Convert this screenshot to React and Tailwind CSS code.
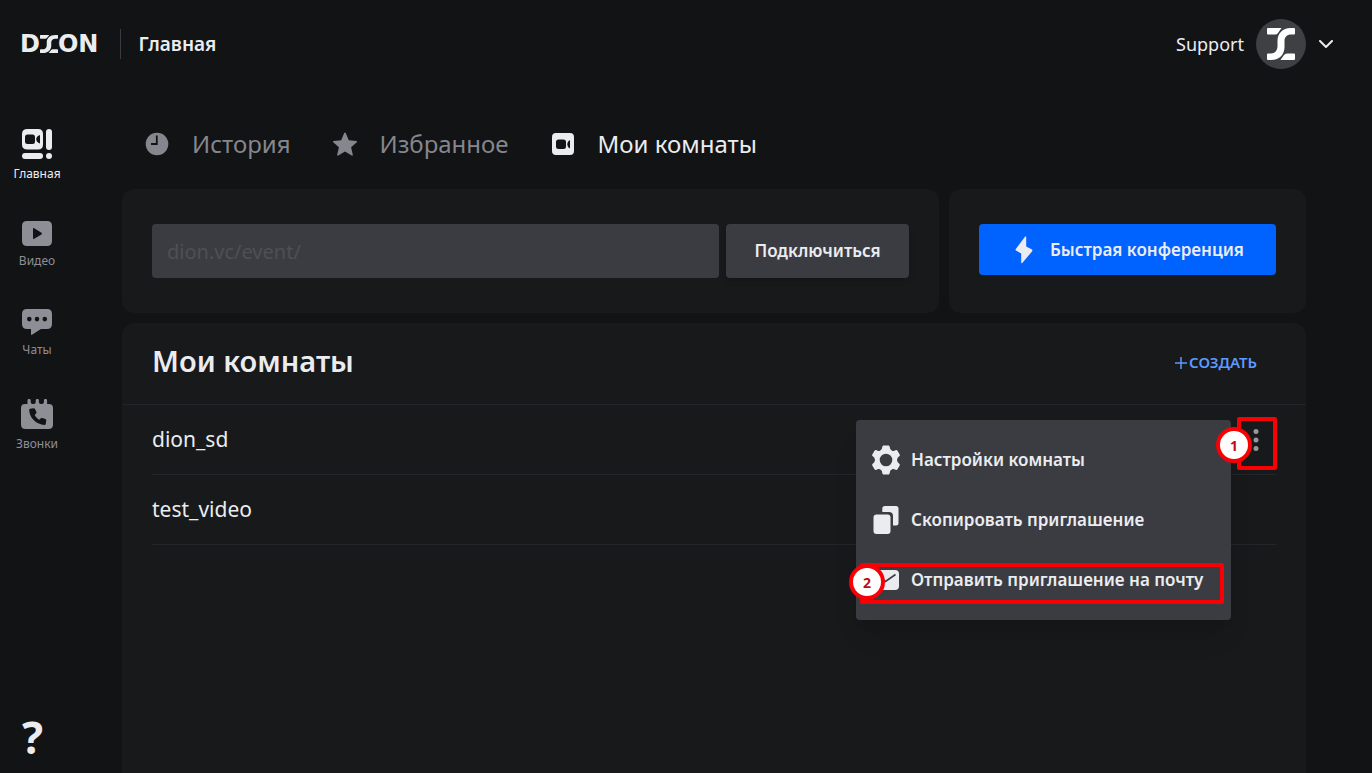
const LIGHT = "text-[#ebecf0]";

function GlyphI({ className }) {
  return (
    <svg viewBox="0 0 28 32" preserveAspectRatio="none" className={className} fill="currentColor" aria-hidden="true">
      <path d="M1 0H14.500L11 5Q10 6.500 8 6.500H1Q0 6.500 0 5.500V1Q0 0 1 0Z" />
      <path d="M27 0H24C15 0 10.500 6 10.500 13V18C10.500 22.500 8 25.500 4 25.500H1Q0 25.500 0 26.500V31Q0 32 1 32H4C13 32 17.500 26 17.500 19V13C17.500 9 20 6.500 24 6.500H27Q28 6.500 28 5.500V1Q28 0 27 0Z" />
      <path d="M27 32H13.500L17 27Q18 25.500 20 25.500H27Q28 25.500 28 26.500V31Q28 32 27 32Z" />
    </svg>
  );
}

function HomeIcon() {
  return (
    <svg viewBox="0 0 30 30" className="h-[30px] w-[30px]" fill="currentColor" aria-hidden="true">
      <path fillRule="evenodd" d="M5.500 0H16Q21 0 21 5V15.500Q21 20.500 16 20.500H5.500Q0 20.500 0 15.500V5Q0 0 5.500 0ZM5.500 5.500Q3 5.500 3 8V12.500Q3 15 5.500 15H10.500Q13 15 13 12.500V8Q13 5.500 10.500 5.500ZM18 6Q14.200 7.500 14.200 10.200Q14.200 13 18 14.500Z" />
      <rect x="24" width="6" height="21" rx="3" />
      <rect y="24" width="21" height="6" rx="3" />
      <circle cx="27" cy="27" r="3" />
    </svg>
  );
}

function VideoIcon() {
  return (
    <svg viewBox="0 0 30 25" className="h-[25px] w-[30px]" fill="currentColor" aria-hidden="true">
      <path fillRule="evenodd" d="M5 0H25Q30 0 30 5V20Q30 25 25 25H5Q0 25 0 20V5Q0 0 5 0ZM11 7.800V17.200Q11 18.400 12.200 17.800L19.500 13.400Q20.500 12.500 19.500 11.700L12.200 7.200Q11 6.600 11 7.800Z" />
    </svg>
  );
}

function ChatIcon() {
  return (
    <svg viewBox="0 0 30 26" className="h-[26px] w-[30px]" fill="currentColor" aria-hidden="true">
      <path fillRule="evenodd" d="M5 0H25Q30 0 30 5V15Q30 20 25 20H19L10 25.800Q9 26.200 9 25V20H5Q0 20 0 15V5Q0 0 5 0ZM7.300 7.800A2.300 2.300 0 1 0 7.300 12.400A2.300 2.300 0 1 0 7.300 7.800ZM15 7.800A2.300 2.300 0 1 0 15 12.400A2.300 2.300 0 1 0 15 7.800ZM22.800 7.800A2.300 2.300 0 1 0 22.800 12.400A2.300 2.300 0 1 0 22.800 7.800Z" />
    </svg>
  );
}

function CallsIcon() {
  return (
    <svg viewBox="0 0 32 30" className="h-[30px] w-8" fill="currentColor" aria-hidden="true">
      <path d="M6.500 5V1.500a1.600 1.600 0 0 1 3.200 0V3q0 2 2 2h1q2 0 2-2V1.500a1.600 1.600 0 0 1 3.200 0V3q0 2 2 2h1q2 0 2-2V1.500a1.600 1.600 0 0 1 3.200 0V5H28Q32 5 32 9V25.500Q32 30 27.500 30H4.500Q0 30 0 25.500V9Q0 5 4 5Z" />
      <path className="fill-[#121315]" d="M9 9.700L12.500 9.200Q13.500 9 14 10L15.300 12.700Q15.800 13.700 15 14.500L13.700 15.900C14.700 18 16.500 19.700 18.400 20.700L19.900 19.300Q20.500 18.700 21.500 19L24.300 20Q25.300 20.400 25.200 21.500L24.800 24.800Q24.600 26 23.500 26C15.500 25.500 8.500 19 8.200 11Q8.100 9.900 9 9.700Z" />
    </svg>
  );
}

function ClockIcon() {
  return (
    <svg viewBox="0 0 24 24" className="h-6 w-6" aria-hidden="true">
      <circle cx="12" cy="12" r="11.300" fill="currentColor" />
      <path d="M11.800 3.500V12H6" fill="none" className="stroke-[#121315]" strokeWidth="1.800" />
    </svg>
  );
}

function StarIcon() {
  return (
    <svg viewBox="0 0 26 24" className="h-6 w-[26px]" fill="currentColor" aria-hidden="true">
      <path d="M12.200 1Q13 0 13.700 1L16.800 8.200L24.400 8.900Q25.600 9.200 24.800 10.200L19.100 15.300L20.800 22.800Q20.900 24 19.700 23.500L13 19.500L6.300 23.500Q5.100 24 5.200 22.800L6.900 15.300L1.200 10.200Q.4 9.200 1.600 8.900L9.200 8.200Z" />
    </svg>
  );
}

function RoomIcon() {
  return (
    <svg viewBox="0 0 22 22" className="h-[22px] w-[22px]" fill="currentColor" aria-hidden="true">
      <path fillRule="evenodd" d="M4 0H18Q22 0 22 4V18Q22 22 18 22H4Q0 22 0 18V4Q0 0 4 0ZM6.500 6.500Q4 6.500 4 9V13.500Q4 16 6.500 16H11.500Q14 16 14 13.500V9Q14 6.500 11.500 6.500ZM18 7Q15.200 8.500 15.200 11.200Q15.200 14 18 15.500Z" />
    </svg>
  );
}

function BoltIcon() {
  return (
    <svg viewBox="0 0 18 28" className="h-7 w-[18px]" fill="currentColor" aria-hidden="true">
      <path d="M9.800 1Q11 -.4 11.200 1.200V10.500L17 13.600Q17.700 14.300 17.200 15.200L7.500 26.800Q6.300 28 6.200 26.500V17.500L1 14.500Q.2 13.900 .8 13Z" />
    </svg>
  );
}

function GearIcon() {
  return (
    <svg viewBox="0 0 28 30" className="h-[30px] w-7" fill="currentColor" aria-hidden="true">
      <path fillRule="evenodd" d="M11.500 .5H16.500Q17.300 .5 17.500 1.300Q17.700 4.800 20 5.700Q21.500 6.400 24 5.100Q24.800 4.700 25.300 5.400L27.700 9.600Q28.100 10.400 27.500 11Q25 12.700 25 15Q25 17.300 27.500 19Q28.100 19.600 27.700 20.400L25.300 24.600Q24.800 25.300 24 24.900Q21.500 23.600 20 24.300Q17.700 25.200 17.500 28.700Q17.300 29.500 16.500 29.500H11.500Q10.700 29.500 10.500 28.700Q10.300 25.200 8 24.300Q6.500 23.600 4 24.900Q3.200 25.300 2.700 24.600L.3 20.400Q-.1 19.600 .5 19Q3 17.300 3 15Q3 12.700 .5 11Q-.1 10.400 .3 9.600L2.700 5.400Q3.200 4.700 4 5.100Q6.500 6.400 8 5.700Q10.300 4.800 10.500 1.300Q10.700 .5 11.500 .5ZM14 8.700A6.300 6.300 0 1 0 14 21.300A6.300 6.300 0 1 0 14 8.700Z" />
    </svg>
  );
}

function CopyIcon() {
  return (
    <svg viewBox="0 0 28 28" className="h-7 w-7" fill="currentColor" aria-hidden="true">
      <rect x="1.500" y="8.500" width="17" height="19.500" rx="3" />
      <path d="M13 0H24Q26.500 0 26.500 2.500V17Q26.500 19.500 24 19.500H21V10Q21 6 17 6H10.300V2.700Q10.300 0 13 0Z" />
    </svg>
  );
}

function MailIcon() {
  return (
    <svg viewBox="0 0 28 20" className="h-5 w-7" aria-hidden="true">
      <rect x="1" width="26" height="20" rx="4" fill="currentColor" />
      <path d="M4 4.500L13.500 11.500L23.500 4.500" fill="none" className="stroke-[#3b3c41]" strokeWidth="1.600" />
    </svg>
  );
}

function NavItem({ icon, label, active, className }) {
  return (
    <a
      href="#"
      className={`flex flex-col items-center gap-[5px] text-[12px] leading-5 ${active ? LIGHT : "text-[#8d8e96]"} ${className}`}
    >
      {icon}
      {label}
    </a>
  );
}

function Tab({ icon, label, active }) {
  return (
    <a href="#" className={`flex items-center gap-[22px] text-[24px] leading-8 ${active ? LIGHT : "text-[#85868e]"}`}>
      <span className="flex w-[26px] justify-center">{icon}</span>
      {label}
    </a>
  );
}

function Marker({ children, className }) {
  return (
    <span
      className={`absolute flex h-9 w-9 items-center justify-center rounded-full border-4 border-[#f80004] bg-white text-[14px] font-bold text-[#c00a14] ${className}`}
    >
      {children}
    </span>
  );
}

function MenuItem({ icon, label, children }) {
  return (
    <li className="relative">
      <button type="button" className="flex h-[60px] w-full items-center gap-[11px] pl-4 text-[17px] font-semibold whitespace-nowrap">
        <span className="flex w-7 justify-center">{icon}</span>
        {label}
      </button>
      {children}
    </li>
  );
}

export default function App() {
  return (
    <div
      className={`flex min-h-screen flex-col bg-[#121315] font-[family-name:Noto_Sans,Open_Sans,sans-serif] ${LIGHT}`}
    >
      <header className="flex h-[88px] items-center pr-[39px] pl-5">
        <a
          href="#"
          aria-label="DION"
          className="flex items-center font-[family-name:DejaVu_Sans,sans-serif] text-[24px] leading-none font-bold"
        >
          <span>D</span>
          <GlyphI className="h-[18px] w-[18px]" />
          <span>ON</span>
        </a>
        <h1 className="ml-[22px] flex h-[30px] items-center border-l border-[#3b3c40] pl-[17px] text-[19px] font-semibold">
          Главная
        </h1>
        <button type="button" className="ml-auto flex items-center text-[18px]">
          Support
          <span className="ml-3 flex h-[50px] w-[50px] items-center justify-center rounded-full bg-[#3f4044] text-white">
            <GlyphI className="h-8 w-7" />
          </span>
          <svg viewBox="0 0 14 8" className="ml-[13px] h-2 w-[14px]" fill="none" stroke="currentColor" strokeWidth="2" strokeLinecap="round" aria-hidden="true">
            <path d="M1 1L7 7L13 1" />
          </svg>
        </button>
      </header>

      <div className="flex flex-1">
        <nav className="flex w-[74px] flex-col pt-[41px]">
          <NavItem icon={<HomeIcon />} label="Главная" active className="" />
          <NavItem icon={<VideoIcon />} label="Видео" className="mt-[37px]" />
          <NavItem icon={<ChatIcon />} label="Чаты" className="mt-[38px]" />
          <NavItem icon={<CallsIcon />} label="Звонки" className="mt-[39px]" />
          <a href="#" aria-label="Помощь" className="mt-auto pb-[14px] pl-[22px] text-[44px] leading-none font-bold">
            ?
          </a>
        </nav>

        <main className="mr-[66px] ml-12 flex flex-1 flex-col">
          <div className="flex h-[101px] items-center gap-[41px] pt-[10px] pl-[22px]">
            <Tab icon={<ClockIcon />} label="История" />
            <Tab icon={<StarIcon />} label="Избранное" />
            <Tab icon={<RoomIcon />} label="Мои комнаты" active />
          </div>

          <div className="flex gap-[10px]">
            <form className="flex h-[124px] flex-1 gap-[7px] rounded-xl bg-[#17191a] px-[30px] pt-[35px]">
              <input
                aria-label="Адрес мероприятия"
                placeholder="dion.vc/event/"
                className="h-[54px] min-w-0 flex-1 rounded-sm bg-[#3b3c41] px-[15px] text-[20px] placeholder:text-[#4e4f57]"
              />
              <button type="button" className="h-[54px] w-[183px] rounded-sm bg-[#3b3c41] text-[17px] font-semibold shadow-md">
                Подключиться
              </button>
            </form>
            <section className="h-[124px] w-[357px] rounded-xl bg-[#17191a] px-[30px] pt-[35px]">
              <button
                type="button"
                className="flex h-[51px] w-full items-center justify-center gap-[17px] rounded-sm bg-[#0062ff] pl-1 text-[17px] font-semibold whitespace-nowrap"
              >
                <BoltIcon />
                Быстрая конференция
              </button>
            </section>
          </div>

          <section className="mt-[10px] flex-1 rounded-t-xl bg-[#17191a]">
            <div className="flex h-[82px] items-center justify-between border-b border-[#242528] pr-[49px] pb-[6px] pl-[30px]">
              <h2 className="text-[29px] font-semibold">Мои комнаты</h2>
              <button type="button" className="flex items-center gap-[2px] pt-1 text-[15px] font-semibold text-[#5c9aff]">
                <svg viewBox="0 0 12 12" className="h-3 w-3" stroke="currentColor" strokeWidth="1.500" aria-hidden="true">
                  <path d="M6 0V12M0 6H12" />
                </svg>
                СОЗДАТЬ
              </button>
            </div>
            <ul className="px-[30px] text-[21px]">
              <li className="relative flex h-[70px] items-center justify-between border-b border-[#242528]">
                dion_sd
                <button type="button" aria-label="Действия" className="mr-[17px] text-[#96979d]">
                  <svg viewBox="0 0 6 22" className="h-[22px] w-[6px]" fill="currentColor" aria-hidden="true">
                    <circle cx="3" cy="2.500" r="2.500" />
                    <circle cx="3" cy="11" r="2.500" />
                    <circle cx="3" cy="19.500" r="2.500" />
                  </svg>
                </button>
                <ul className="absolute top-[15px] right-[45px] z-10 w-[375px] rounded-sm bg-[#3b3c41] py-[10px] shadow-xl">
                  <MenuItem icon={<GearIcon />} label="Настройки комнаты" />
                  <MenuItem icon={<CopyIcon />} label="Скопировать приглашение" />
                  <MenuItem icon={<MailIcon />} label="Отправить приглашение на почту">
                    <span className="pointer-events-none absolute top-[13px] right-[7px] left-1 h-[41px] rounded-xs border-4 border-[#f80004]" />
                    <Marker className="top-[14px] left-[-7px]">2</Marker>
                  </MenuItem>
                </ul>
                <span className="pointer-events-none absolute top-3 right-[-1px] z-20 h-[53px] w-10 rounded-xs border-4 border-[#f80004]" />
                <Marker className="top-[22px] right-6 z-20">1</Marker>
              </li>
              <li className="flex h-[70px] items-center border-b border-[#242528]">test_video</li>
            </ul>
          </section>
        </main>
      </div>
    </div>
  );
}
